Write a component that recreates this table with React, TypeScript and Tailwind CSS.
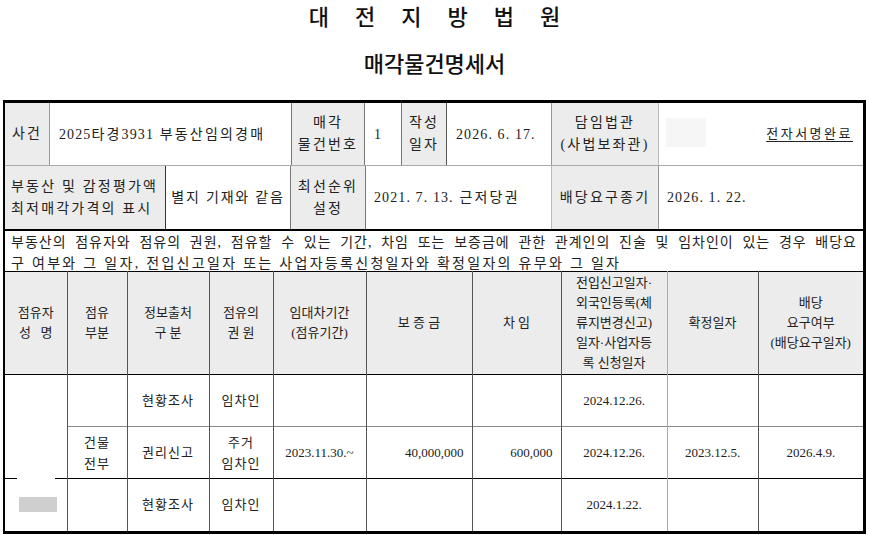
const font = "font-['Liberation_Serif','Noto_Sans_CJK_KR',serif]";

function Gray({ w, children, className = "" }: { w: string; children?: React.ReactNode; className?: string }) {
  return (
    <div className={`${w} bg-[#ececec] flex flex-col items-center justify-center leading-[22px] ${className}`}>
      {children}
    </div>
  );
}

// digits are tighter than hangul in the original
function N({ children }: { children: React.ReactNode }) {
  return <span className="tracking-[1.1px]">{children}</span>;
}

const rows = [
  {
    place: "",
    source: "현황조사",
    right: ["임차인"],
    period: "",
    deposit: "",
    rent: "",
    moveIn: "2024.12.26.",
    fixed: "",
    claim: "",
  },
  {
    place: "건물\n전부",
    source: "권리신고",
    right: ["주거", "임차인"],
    period: "2023.11.30.~",
    deposit: "40,000,000",
    rent: "600,000",
    moveIn: "2024.12.26.",
    fixed: "2023.12.5.",
    claim: "2026.4.9.",
  },
  {
    place: "",
    source: "현황조사",
    right: ["임차인"],
    period: "",
    deposit: "",
    rent: "",
    moveIn: "2024.1.22.",
    fixed: "",
    claim: "",
  },
];

export default function App() {
  return (
    <div className={`w-[869px] h-[535px] bg-white overflow-hidden text-[#222] ${font}`}>
      {/* titles */}
      <div className="h-[100px] flex flex-col items-center font-['Noto_Sans_CJK_KR',sans-serif]">
        <div className="flex gap-[26px] text-[22px] font-medium leading-[30px] text-[#111]">
          {["대", "전", "지", "방", "법", "원"].map((c) => (
            <span key={c}>{c}</span>
          ))}
        </div>
        <div className="mt-[17px] text-[22px] font-medium leading-[30px] text-[#111]">매각물건명세서</div>
      </div>

      <div className="ml-[3px] w-[863px] border-t-[3px] border-l-2 border-r-[3px] border-b-[3px] border-black">
        {/* row 1 */}
        <div className="flex h-[63px] text-[14px] tracking-[2.2px] border-b border-[#aaa]">
          <Gray w="w-[45px]" className="border-r border-[#999]">사건</Gray>
          <div className="w-[242px] flex items-center pl-[9px] border-r border-[#777]">
            <span>
              <N>2025</N>타경<N>3931</N> 부동산임의경매
            </span>
          </div>
          <Gray w="w-[73px]" className="border-r border-[#777]">
            <span>매각</span>
            <span>물건번호</span>
          </Gray>
          <div className="w-[37px] flex items-center pl-[9px] border-r border-[#777]">1</div>
          <Gray w="w-[45px]" className="border-r border-[#555]">
            <span>작성</span>
            <span>일자</span>
          </Gray>
          <div className="w-[105px] flex items-center pl-[9px] border-r border-[#999]">
            <N>2026. 6. 17.</N>
          </div>
          <Gray w="w-[107px]" className="border-r border-[#bbb]">
            <span>담임법관</span>
            <span>(사법보좌관)</span>
          </Gray>
          <div className="flex-1 relative flex items-center justify-end pr-[10px]">
            <div className="absolute left-[7px] top-[15px] w-[40px] h-[29px] bg-[#f6f6f6]" />
            <span className="text-[13px] underline underline-offset-[3px] tracking-[2.5px]">전자서명완료</span>
          </div>
        </div>

        {/* row 2 */}
        <div className="flex h-[63px] text-[14px] tracking-[2.2px]">
          <div className="w-[161px] bg-[#ececec] flex flex-col justify-center pl-[6px] leading-[22px] border-r border-[#333]">
            <span>부동산 및 감정평가액</span>
            <span>최저매각가격의 표시</span>
          </div>
          <div className="w-[125px] flex items-center justify-center border-r border-[#777] tracking-[1.8px]">
            별지 기재와 같음
          </div>
          <Gray w="w-[75px]" className="border-r border-[#777]">
            <span>최선순위</span>
            <span>설정</span>
          </Gray>
          <div className="w-[186px] flex items-center pl-[8px] border-r border-[#bbb]">
            <span>
              <N>2021. 7. 13.</N> 근저당권
            </span>
          </div>
          <Gray w="w-[107px]" className="border-r border-[#999]">배당요구종기</Gray>
          <div className="flex-1 flex items-center pl-[8px]">
            <N>2026. 1. 22.</N>
          </div>
        </div>

        {/* statement */}
        <div className="border-t-2 border-black h-[42px] px-[6px] pt-[1px] text-[14px] leading-[21px] tracking-[2.3px]">
          <div className="text-justify [text-align-last:justify] tracking-[1px]">
            부동산의 점유자와 점유의 권원, 점유할 수 있는 기간, 차임 또는 보증금에 관한 관계인의 진술 및 임차인이 있는 경우 배당요
          </div>
          <div>구 여부와 그 일자, 전입신고일자 또는 사업자등록신청일자와 확정일자의 유무와 그 일자</div>
        </div>

        {/* occupants table */}
        <table className="w-full table-fixed border-collapse text-[13px]">
          <colgroup>
            <col className="w-[62px]" />
            <col className="w-[60px]" />
            <col className="w-[82px]" />
            <col className="w-[64px]" />
            <col className="w-[93px]" />
            <col className="w-[106px]" />
            <col className="w-[89px]" />
            <col className="w-[106px]" />
            <col className="w-[91px]" />
            <col />
          </colgroup>
          <thead>
            <tr className="h-[103px] bg-[#ececec] leading-[20px] text-center border-t border-black border-b border-[#aaa]">
              <th className="font-normal border-r border-[#555]">
                점유자
                <br />성 &nbsp; 명
              </th>
              <th className="font-normal border-r border-[#555]">
                점유
                <br />부분
              </th>
              <th className="font-normal border-r border-[#555]">
                정보출처
                <br />구 분
              </th>
              <th className="font-normal border-r border-[#555]">
                점유의
                <br />권 원
              </th>
              <th className="font-normal border-r border-[#555]">
                임대차기간
                <br />(점유기간)
              </th>
              <th className="font-normal border-r border-[#555]">보 증 금</th>
              <th className="font-normal border-r border-[#555]">차 임</th>
              <th className="font-normal border-r border-[#aaa]">
                전입신고일자·
                <br />외국인등록(체
                <br />류지변경신고)
                <br />일자·사업자등
                <br />록 신청일자
              </th>
              <th className="font-normal border-r border-[#555]">확정일자</th>
              <th className="font-normal">
                배당
                <br />요구여부
                <br />(배당요구일자)
              </th>
            </tr>
          </thead>
          <tbody>
            {rows.map((r, i) => (
              <tr
                key={i}
                className={`h-[52px] text-center leading-[21px] ${i === 1 ? "border-t border-[#888]" : ""} ${
                  i === 2 ? "border-t border-black" : ""
                }`}
              >
                {i === 0 && <td rowSpan={2} className="border-r border-[#555] relative" />}
                {i === 2 && (
                  <td className="border-r border-[#555] relative">
                    <div className="absolute left-[12px] -top-[1px] w-[38px] h-[2px] bg-white" />
                    <div className="ml-[14px] w-[38px] h-[15px] bg-[#cfcfcf]" />
                  </td>
                )}
                <td className="border-r border-[#555] whitespace-pre-line tracking-[1px]">{r.place}</td>
                <td className="border-r border-[#555] tracking-[1px]">{r.source}</td>
                <td className="border-r border-[#555] tracking-[1px]">
                  {r.right.map((t) => (
                    <div key={t}>{t}</div>
                  ))}
                </td>
                <td className="border-r border-[#555]">{r.period}</td>
                <td className="border-r border-[#555] text-right pr-[8px]">{r.deposit}</td>
                <td className="border-r border-[#555] text-right pr-[8px]">{r.rent}</td>
                <td className="border-r border-[#aaa]">{r.moveIn}</td>
                <td className="border-r border-[#555]">{r.fixed}</td>
                <td>{r.claim}</td>
              </tr>
            ))}
          </tbody>
        </table>
      </div>
    </div>
  );
}
